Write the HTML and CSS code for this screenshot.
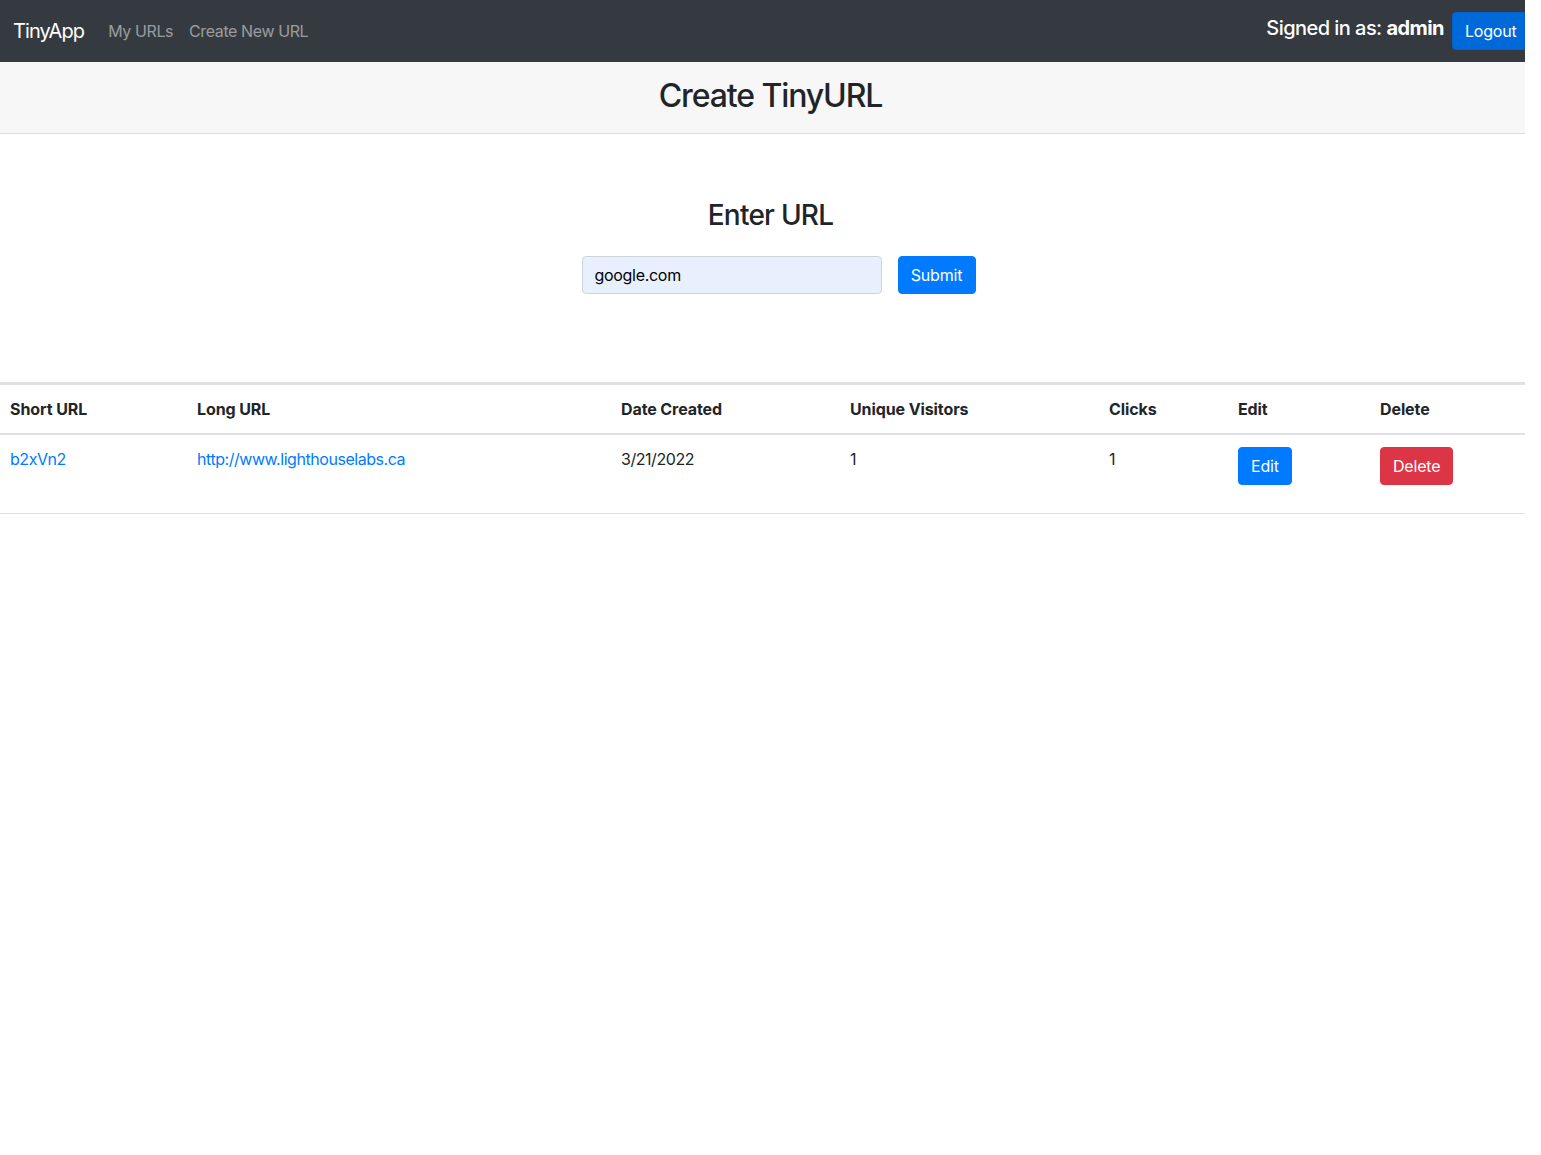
FILE: index.html
```html
<!DOCTYPE html>
<html lang="en">
<head>
<meta charset="utf-8">
<title>TinyApp</title>
<link rel="stylesheet" href="styles.css">
</head>
<body>
<div class="page">
  <nav class="navbar">
    <div class="nav-left">
      <a class="brand" href="#">TinyApp</a>
      <a class="nav-link" href="#">My URLs</a>
      <a class="nav-link" href="#">Create New URL</a>
    </div>
    <div class="nav-right">
      <h5 class="signed">Signed in as: <b>admin</b></h5>
      <button class="btn btn-logout">Logout</button>
    </div>
  </nav>

  <header class="page-header">
    <h2 class="page-title">Create TinyURL</h2>
  </header>

  <section class="enter">
    <h3 class="enter-title">Enter URL</h3>
    <form class="enter-form">
      <input class="url-input" type="text" value="google.com">
      <button class="btn btn-primary btn-submit" type="button">Submit</button>
    </form>
  </section>

  <table class="table">
    <thead>
      <tr>
        <th class="c1">Short URL</th>
        <th class="c2">Long URL</th>
        <th class="c3">Date Created</th>
        <th class="c4">Unique Visitors</th>
        <th class="c5">Clicks</th>
        <th class="c6">Edit</th>
        <th class="c7">Delete</th>
      </tr>
    </thead>
    <tbody>
      <tr>
        <td><a href="#">b2xVn2</a></td>
        <td><a href="#">http://www.lighthouselabs.ca</a></td>
        <td>3/21/2022</td>
        <td>1</td>
        <td>1</td>
        <td><form class="cell-form"><button class="btn btn-primary" type="button">Edit</button></form></td>
        <td><form class="cell-form"><button class="btn btn-danger" type="button">Delete</button></form></td>
      </tr>
    </tbody>
  </table>
</div>
</body>
</html>
```

FILE: styles.css
```css
* { box-sizing: border-box; }

html, body {
  margin: 0;
  padding: 0;
  background: #fff;
}

body {
  font-family: "Inter", "Roboto", "Liberation Sans", sans-serif;
  font-size: 16px;
  line-height: 1.5;
  color: #212529;
}

.page {
  width: 1541px;
  overflow: hidden;
}

.navbar {
  width: 1525px;
  height: 62px;
  background: #343a40;
  display: flex;
  align-items: center;
  justify-content: space-between;
  padding: 0 0 0 13px;
}

.nav-left {
  display: flex;
  align-items: center;
}

.brand {
  color: #fff;
  font-size: 20px;
  text-decoration: none;
  margin-right: 24px;
  letter-spacing: -0.9px;
}

.nav-link {
  color: rgba(255, 255, 255, 0.5);
  text-decoration: none;
  font-size: 16px;
  margin-right: 16px;
  letter-spacing: -0.4px;
}

.nav-right {
  display: flex;
  align-items: center;
}

.signed {
  color: #fff;
  font-size: 20px;
  font-weight: 500;
  margin: 0 8px 6px 0;
  line-height: 1.2;
  letter-spacing: -0.55px;
}

.signed b { font-weight: 700; }

.btn {
  font-family: inherit;
  font-size: 16px;
  line-height: 1.5;
  border: 1px solid transparent;
  border-radius: 4px;
  padding: 6px 12px;
  color: #fff;
  cursor: pointer;
  letter-spacing: -0.2px;
}

.btn-logout {
  background: #0069d9;
  border-color: #0062cc;
  border-top-right-radius: 0;
  border-bottom-right-radius: 0;
  height: 38px;
  width: 73px;
  text-align: left;
  padding-left: 12px;
}

.btn-primary {
  background: #007bff;
  border-color: #007bff;
}

.btn-danger {
  background: #dc3545;
  border-color: #dc3545;
}

.page-header {
  width: 1525px;
  height: 72px;
  background: #f7f7f7;
  border-bottom: 1px solid #dcdcdc;
  display: flex;
  align-items: center;
  justify-content: center;
  padding-left: 16px;
  padding-bottom: 2px;
}

.page-title {
  margin: 0;
  font-size: 32px;
  font-weight: 500;
  line-height: 1.2;
  letter-spacing: -1.1px;
}

.enter {
  display: flex;
  flex-direction: column;
  align-items: center;
  padding-top: 65px;
  height: 248px;
}

.enter-title {
  margin: 0 0 23px 0;
  font-size: 28px;
  font-weight: 500;
  line-height: 1.2;
  letter-spacing: -0.75px;
}

.enter-form {
  display: flex;
  gap: 16px;
  margin-left: 16px;
}

.url-input {
  width: 300px;
  height: 38px;
  background: #e8f0fe;
  border: 1px solid #ced4da;
  border-radius: 4px;
  padding: 6px 12px;
  font-family: inherit;
  font-size: 16px;
  color: #000;
  letter-spacing: -0.3px;
}

.btn-submit {
  height: 38px;
  width: 78px;
}

.table {
  width: 1525px;
  border-collapse: collapse;
  border-top: 3px solid #dee2e6;
}

.table th,
.table td {
  text-align: left;
  vertical-align: top;
  padding: 12px 10px;
  font-size: 16px;
}

.table th {
  font-weight: 700;
  border-bottom: 2px solid #dee2e6;
  letter-spacing: -0.1px;
}

.table td {
  border-bottom: 1px solid #dee2e6;
  letter-spacing: -0.45px;
}

.table a {
  color: #007bff;
  text-decoration: none;
}

.c1 { width: 187px; }
.c2 { width: 424px; }
.c3 { width: 229px; }
.c4 { width: 259px; }
.c5 { width: 129px; }
.c6 { width: 142px; }

.cell-form {
  margin: 0 0 16px 0;
}

.cell-form .btn {
  height: 38px;
}
```
